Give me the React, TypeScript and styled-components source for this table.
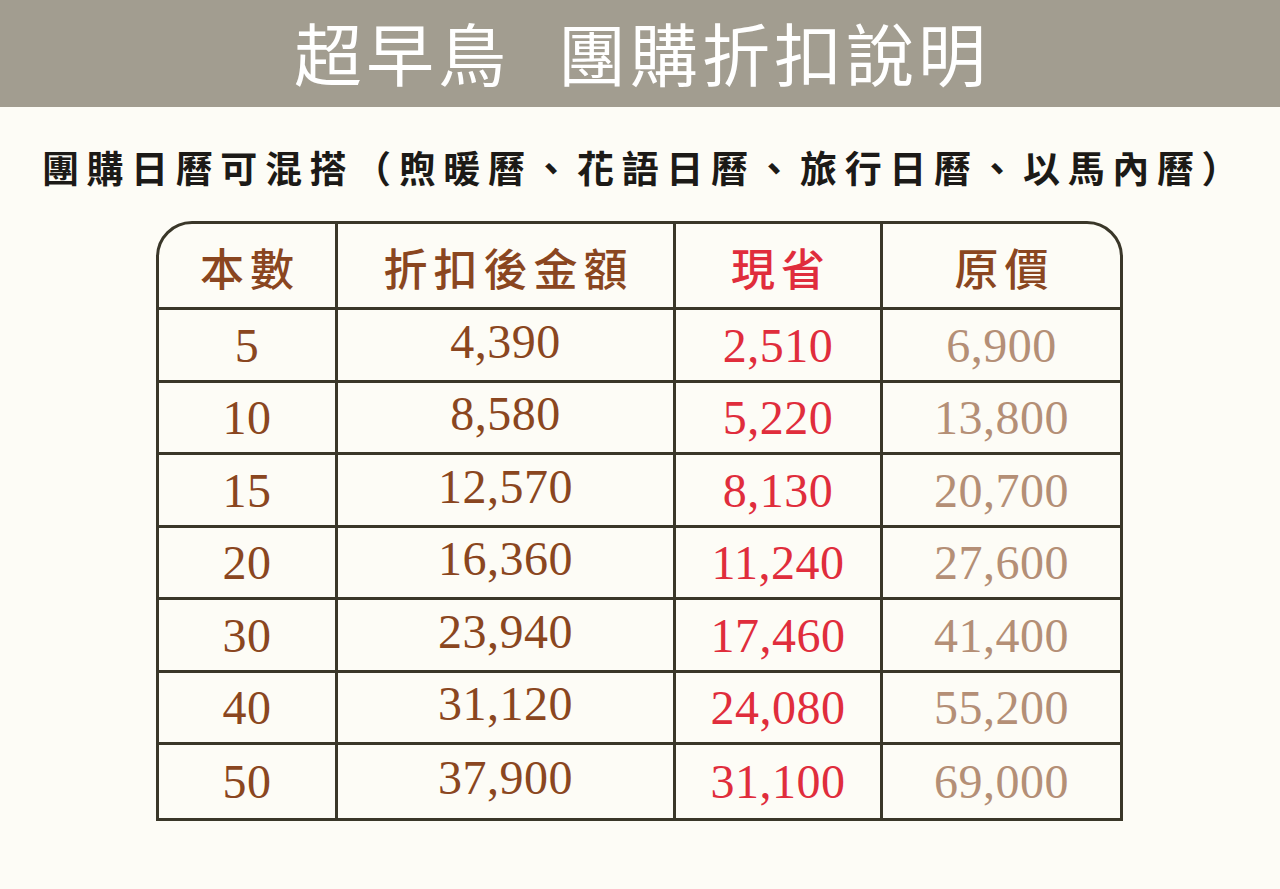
import React from "react";
import styled, { createGlobalStyle } from "styled-components";

const GlobalStyle = createGlobalStyle`
  html, body {
    margin: 0;
    padding: 0;
    background: #fdfcf6;
  }
  body {
    font-family: "Noto Sans CJK TC", "Noto Sans CJK SC", sans-serif;
  }
`;

const Page = styled.div`
  width: 1280px;
  height: 889px;
  background: #fdfcf6;
  display: flex;
  flex-direction: column;
  align-items: center;
`;

const Banner = styled.header`
  width: 100%;
  height: 107px;
  background: #a29d90;
  display: flex;
  align-items: center;
  justify-content: center;
  gap: 52px;
  padding-bottom: 4px;
  box-sizing: border-box;
`;

const BannerWord = styled.h1`
  margin: 0;
  font-family: "Noto Sans CJK TC", sans-serif;
  font-weight: 400;
  font-size: 68px;
  line-height: 1;
  letter-spacing: 4px;
  margin-right: -4px;
  color: #ffffff;
`;

const Subtitle = styled.p`
  margin: 42px 0 0 8px;
  font-family: "Noto Sans CJK TC", sans-serif;
  font-weight: 700;
  font-size: 37px;
  line-height: 1;
  letter-spacing: 7.6px;
  color: #1c1a17;
  white-space: nowrap;
`;

const Table = styled.div`
  margin-top: 35px;
  margin-right: 1px;
  width: 967px;
  box-sizing: border-box;
  border: 3px solid #3a3729;
  border-radius: 36px 36px 0 0;
  overflow: hidden;
  display: grid;
  grid-template-columns: 179px 338px 207px 1fr;
  grid-template-rows: 86px repeat(7, 72.5px);
`;

const Cell = styled.div<{ $last?: boolean; $bottom?: boolean; $shift?: number }>`
  display: flex;
  align-items: center;
  justify-content: center;
  border-right: ${(p) => (p.$last ? "none" : "3px solid #3a3729")};
  border-bottom: ${(p) => (p.$bottom ? "none" : "3px solid #3a3729")};
  padding-bottom: ${(p) => Math.max(0, p.$shift ?? 0)}px;
  padding-top: ${(p) => Math.max(0, -(p.$shift ?? 0))}px;
  box-sizing: border-box;
`;

const HeadText = styled.span<{ $color: string }>`
  font-family: "Noto Sans CJK TC", sans-serif;
  font-weight: 500;
  font-size: 44px;
  line-height: 1;
  letter-spacing: 6px;
  margin-right: -6px;
  color: ${(p) => p.$color};
`;

const Num = styled.span<{ $color: string }>`
  font-family: "Liberation Serif", "Times New Roman", serif;
  font-size: 48px;
  line-height: 1;
  letter-spacing: 0.5px;
  color: ${(p) => p.$color};
`;

const BROWN = "#8a4620";
const RED = "#e02d3c";
const TAN = "#b48f76";

const headers: { label: string; color: string }[] = [
  { label: "本數", color: BROWN },
  { label: "折扣後金額", color: BROWN },
  { label: "現省", color: RED },
  { label: "原價", color: BROWN },
];

const rows: [string, string, string, string][] = [
  ["5", "4,390", "2,510", "6,900"],
  ["10", "8,580", "5,220", "13,800"],
  ["15", "12,570", "8,130", "20,700"],
  ["20", "16,360", "11,240", "27,600"],
  ["30", "23,940", "17,460", "41,400"],
  ["40", "31,120", "24,080", "55,200"],
  ["50", "37,900", "31,100", "69,000"],
];

const colColors = [BROWN, BROWN, RED, TAN];
const colShift = [-2, 6, -2, -2];

export default function App() {
  return (
    <>
      <GlobalStyle />
      <Page>
        <Banner>
          <BannerWord>超早鳥</BannerWord>
          <BannerWord>團購折扣說明</BannerWord>
        </Banner>
        <Subtitle>團購日曆可混搭（煦暖曆、花語日曆、旅行日曆、以馬內曆）</Subtitle>
        <Table>
          {headers.map((h, i) => (
            <Cell key={h.label} $last={i === 3} $shift={-2}>
              <HeadText $color={h.color}>{h.label}</HeadText>
            </Cell>
          ))}
          {rows.map((r, ri) =>
            r.map((v, ci) => (
              <Cell
                key={`${ri}-${ci}`}
                $last={ci === 3}
                $bottom={ri === rows.length - 1}
                $shift={colShift[ci]}
              >
                <Num $color={colColors[ci]}>{v}</Num>
              </Cell>
            ))
          )}
        </Table>
      </Page>
    </>
  );
}
